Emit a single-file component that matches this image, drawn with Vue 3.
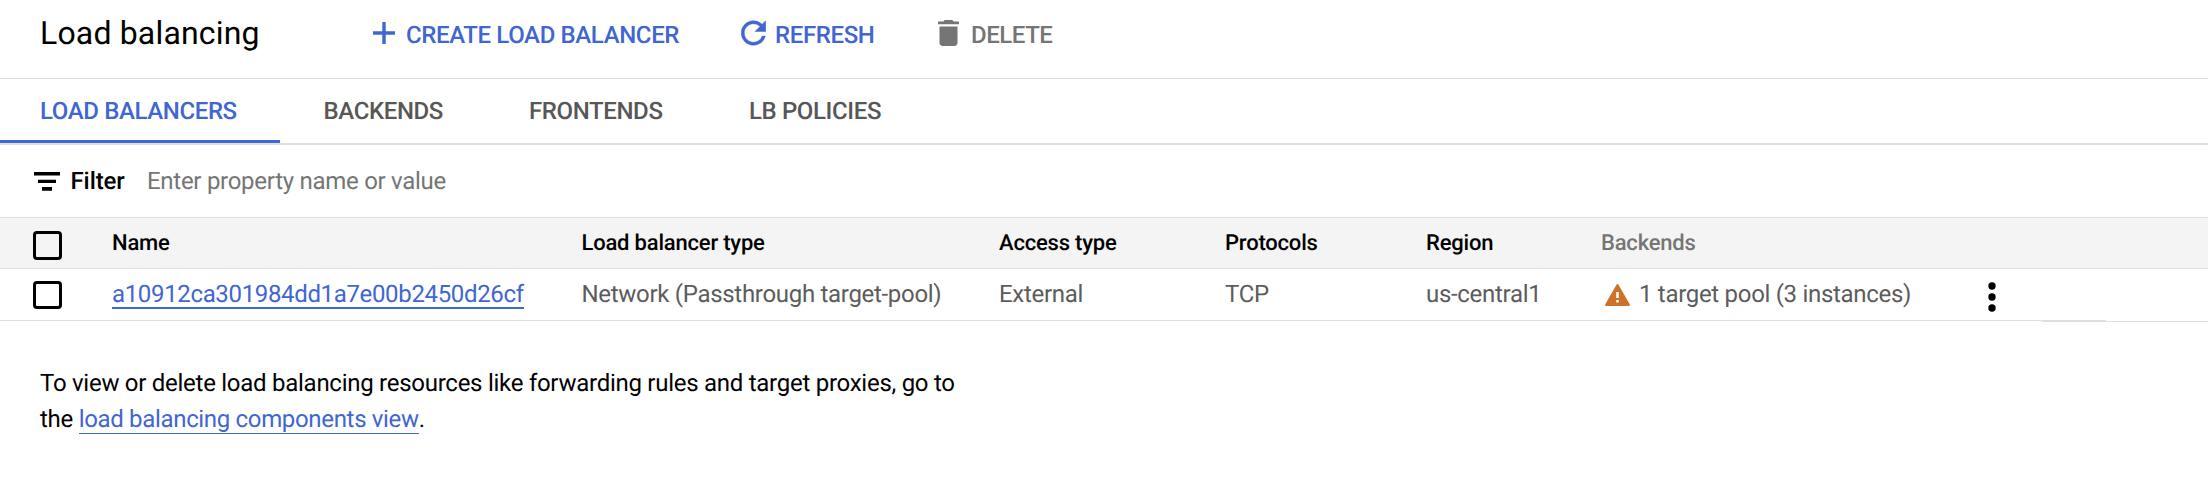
<script setup>
const actions = [
  { key: 'create', label: 'CREATE LOAD BALANCER' },
  { key: 'refresh', label: 'REFRESH' },
  { key: 'delete', label: 'DELETE' },
]
const tabs = [
  { key: 'lbs', label: 'LOAD BALANCERS', active: true },
  { key: 'backends', label: 'BACKENDS' },
  { key: 'frontends', label: 'FRONTENDS' },
  { key: 'policies', label: 'LB POLICIES' },
]
</script>

<template>
  <main class="page">
    <header class="top">
      <h1 class="title">Load balancing</h1>
      <button v-for="a in actions" :key="a.key" class="action" :class="a.key">
        <svg v-if="a.key === 'create'" class="ico" viewBox="0 0 22 22"><path d="M9.300 0h3.400v9.300H22v3.400h-9.300V22H9.300v-9.300H0V9.300h9.300z" /></svg>
        <svg v-else-if="a.key === 'refresh'" class="ico" viewBox="3.850 3.850 16.300 16.300"><path d="M17.65 6.35A7.958 7.958 0 0 0 12 4c-4.42 0-7.99 3.58-7.99 8s3.57 8 7.99 8c3.73 0 6.84-2.55 7.73-6h-2.08A5.99 5.99 0 0 1 12 18c-3.31 0-6-2.69-6-6s2.69-6 6-6c1.66 0 3.14.69 4.22 1.78L13 11h7V4z" /></svg>
        <svg v-else class="ico" viewBox="5 3 14 18" preserveAspectRatio="none"><path d="M6 19c0 1.100.9 2 2 2h8c1.100 0 2-.9 2-2V7.500H6zM19 4h-3.500l-1-1h-5l-1 1H5v2h14z" /></svg>
        <span class="act-text">{{ a.label }}</span>
      </button>
    </header>

    <nav class="tabs">
      <a v-for="t in tabs" :key="t.key" class="tab" :class="[t.key, { active: t.active }]"><span>{{ t.label }}</span></a>
    </nav>

    <div class="filter">
      <svg class="filter-ico" viewBox="0 0 26 19"><path d="M0 0h26v3.600H0zM4 7.700h18v3.400H4zM8 15h10v3.700H8z" /></svg>
      <span class="filter-label">Filter</span>
      <span class="filter-hint">Enter property name or value</span>
    </div>

    <section class="table">
      <div class="row head">
        <span class="box"></span>
        <span>Name</span>
        <span>Load balancer type</span>
        <span>Access type</span>
        <span>Protocols</span>
        <span>Region</span>
        <span class="muted">Backends</span>
      </div>
      <div class="row item">
        <span class="box"></span>
        <span><a class="link">a10912ca301984dd1a7e00b2450d26cf</a></span>
        <span>Network (Passthrough target-pool)</span>
        <span>External</span>
        <span>TCP</span>
        <span>us-central1</span>
        <span class="backend">
          <svg class="warn" viewBox="0 0 25 22"><path d="M11.600.6q.9-1.200 1.800 0L24.700 20.200q.6 1.800-.9 1.800H1.200Q-.3 22 .3 20.200z" /><path class="mark" d="M11.200 8h2.600v6h-2.600zM11.200 16h2.600v2.500h-2.600z" /></svg>
          <span>1 target pool (3 instances)</span>
        </span>
        <svg class="dots" viewBox="0 0 8 30"><circle cx="4" cy="4" r="3.700" /><circle cx="4" cy="15" r="3.700" /><circle cx="4" cy="26" r="3.700" /></svg>
      </div>
      <div class="edge"><i class="edge-a"></i><i class="edge-b"></i></div>
    </section>

    <p class="note">To view or delete load balancing resources like forwarding rules and target proxies, go to<br>the <a class="note-link">load balancing components view</a>.</p>
  </main>
</template>

<style>
body { margin: 0; background: #fff; }
</style>

<style scoped>
.page { width: 2208px; height: 490px; overflow: hidden; box-sizing: border-box; background: #fff; color: #000; font-family: Roboto, sans-serif; font-size: 24px; letter-spacing: -0.3px; white-space: nowrap; text-rendering: geometricPrecision; }
.top { height: 78px; border-bottom: 1px solid #dedede; display: flex; align-items: flex-start; padding-left: 40px; }
.title { margin: 14px 0 0; width: 333px; font-size: 32px; line-height: 38px; font-weight: 400; letter-spacing: .17px; }
.action { display: flex; align-items: flex-start; border: 0; padding: 0; margin: 0; background: none; font: 500 24px/28px Roboto, sans-serif; letter-spacing: -.37px; color: #3f66d1; text-align: left; text-rendering: inherit; }
.act-text { margin-top: 21px; }
.ico { fill: currentColor; flex: none; }
.create { width: 368px; }
.create .ico { width: 22px; height: 22px; margin: 22px 11px 0 0; }
.refresh { width: 197px; }
.refresh .ico { width: 25px; height: 26px; margin: 20px 9px 0 0; stroke: currentColor; stroke-width: .3; }
.delete { color: #757575; letter-spacing: -.45px; }
.delete .ico { width: 21px; height: 26px; margin: 20px 12px 0 0; }
.tabs { height: 64px; border-bottom: 2px solid #dedede; display: flex; font-weight: 500; color: #575757; letter-spacing: -.38px; }
.tab { box-sizing: border-box; height: 64px; padding-top: 18px; line-height: 28px; }
.lbs { width: 280px; padding-left: 40px; }
.backends { width: 206px; padding-left: 43.500px; }
.frontends { width: 219px; padding-left: 43px; }
.policies { padding-left: 44px; }
.active { color: #3f66d1; border-bottom: 3px solid #3f66d1; }
.filter { height: 72px; display: flex; align-items: flex-start; padding-left: 34px; }
.filter-ico { width: 26px; height: 19px; margin-top: 27px; }
.filter-label { margin: 22px 0 0 10.500px; width: 76.500px; line-height: 28px; font-weight: 500; letter-spacing: -.1px; }
.filter-hint { margin-top: 22px; line-height: 28px; color: #757575; letter-spacing: -.28px; }
.row { display: grid; grid-template-columns: 79px 469.500px 417.500px 226px 201px 175px 386.500px 8px; padding-left: 33px; box-sizing: border-box; align-items: start; }
.head { height: 52px; border-top: 1px solid #dedede; border-bottom: 1px solid #dedede; background: #f4f4f4; font-size: 22px; line-height: 26px; font-weight: 500; letter-spacing: -.2px; }
.head > span:not(.box) { padding-top: 13px; }
.item { height: 51px; color: #5c5c5c; line-height: 28px; }
.item > span:not(.box) { padding-top: 11px; }
.box { width: 29px; height: 29px; box-sizing: border-box; border: 3px solid #000; border-radius: 4px; margin-top: 13px; }
.item .box { height: 28px; margin-top: 12px; }
.muted { color: #757575; }
.link { color: #3f66d1; display: inline-block; height: 27px; border-bottom: 2px solid #3f66d1; letter-spacing: -.345px; }
.backend { display: flex; }
.warn { width: 25px; height: 22px; margin: 4px 9px 0 4px; fill: #cd722b; flex: none; }
.mark { fill: #fff; }
.dots { width: 8px; height: 30px; margin-top: 13px; }
.edge { height: 2px; display: grid; grid-template-columns: 2042px 64px 102px; }
.edge-a { grid-column: 1 / 3; grid-row: 1; height: 1px; background: #dedede; }
.edge-b { grid-column: 2 / 4; grid-row: 1; height: 1px; margin-top: 1px; background: #dedede; }
.note { margin: 43px 0 0 40px; line-height: 36px; letter-spacing: -.267px; }
.note-link { color: #3f66d1; display: inline-block; height: 32px; line-height: 36px; border-bottom: 1px solid #3f66d1; letter-spacing: -.33px; }
</style>
